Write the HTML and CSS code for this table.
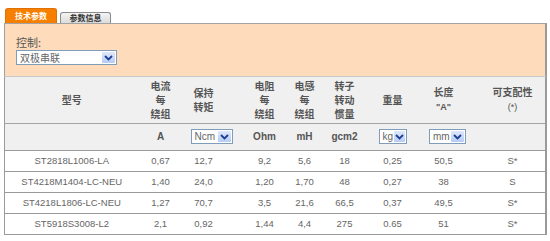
FILE: index.html
```html
<!DOCTYPE html>
<html lang="zh">
<head>
<meta charset="utf-8">
<link rel="stylesheet" href="styles.css">
</head>
<body>
<div class="wrap">
  <div class="tabs">
    <div class="tab active">技术参数</div>
    <div class="tab">参数信息</div>
  </div>
  <div class="panel">
    <div class="label">控制:</div>
    <div class="select wide"><span class="val">双极串联</span><span class="btn"><svg width="9" height="6" viewBox="0 0 9 6"><path d="M1 1 L4.5 4.5 L8 1" fill="none" stroke="#1c3f94" stroke-width="1.8"/></svg></span></div>
  </div>
  <table class="spec">
    <colgroup>
      <col style="width:134px"><col style="width:44px"><col style="width:62px"><col style="width:40px"><col style="width:40px"><col style="width:40px"><col style="width:56px"><col style="width:54px"><col style="width:71px">
    </colgroup>
    <thead>
      <tr class="hrow">
        <th>型号</th>
        <th>电流<br>每<br>绕组</th>
        <th class="c3">保持<br>转矩</th>
        <th>电阻<br>每<br>绕组</th>
        <th>电感<br>每<br>绕组</th>
        <th>转子<br>转动<br>惯量</th>
        <th>重量</th>
        <th class="c8">长度<br><span class="sub">"A"</span></th>
        <th class="c9">可支配性<br><span class="sub n">(*)</span></th>
      </tr>
      <tr class="urow">
        <th></th>
        <th>A</th>
        <th><div class="select unit u-ncm"><span class="val">Ncm</span><span class="btn"><svg width="9" height="6" viewBox="0 0 9 6"><path d="M1 1 L4.5 4.5 L8 1" fill="none" stroke="#1c3f94" stroke-width="1.8"/></svg></span></div></th>
        <th>Ohm</th>
        <th>mH</th>
        <th>gcm2</th>
        <th><div class="select unit u-kg"><span class="val">kg</span><span class="btn"><svg width="9" height="6" viewBox="0 0 9 6"><path d="M1 1 L4.5 4.5 L8 1" fill="none" stroke="#1c3f94" stroke-width="1.8"/></svg></span></div></th>
        <th><div class="select unit u-mm"><span class="val">mm</span><span class="btn"><svg width="9" height="6" viewBox="0 0 9 6"><path d="M1 1 L4.5 4.5 L8 1" fill="none" stroke="#1c3f94" stroke-width="1.8"/></svg></span></div></th>
        <th></th>
      </tr>
    </thead>
    <tbody>
      <tr><td>ST2818L1006-LA</td><td>0,67</td><td class="c3">12,7</td><td>9,2</td><td>5,6</td><td>18</td><td>0,25</td><td class="c8">50,5</td><td class="c9">S*</td></tr>
      <tr><td>ST4218M1404-LC-NEU</td><td>1,40</td><td class="c3">24,0</td><td>1,20</td><td>1,70</td><td>48</td><td>0,27</td><td class="c8">38</td><td class="c9">S</td></tr>
      <tr><td>ST4218L1806-LC-NEU</td><td>1,27</td><td class="c3">70,7</td><td>3,5</td><td>21,6</td><td>66,5</td><td>0,37</td><td class="c8">49,5</td><td class="c9">S*</td></tr>
      <tr><td>ST5918S3008-L2</td><td>2,1</td><td class="c3">0,92</td><td>1,44</td><td>4,4</td><td>275</td><td>0.65</td><td class="c8">51</td><td class="c9">S*</td></tr>
    </tbody>
  </table>
</div>
</body>
</html>
```

FILE: styles.css
```css
* { box-sizing: border-box; }
html, body { margin: 0; padding: 0; background: #fff; }
body { font-family: "Liberation Sans", Arial, "Noto Sans CJK SC", sans-serif; color: #666; }

.wrap { padding: 8px 0 0 4px; width: 547px; }

.tabs { display: flex; align-items: flex-end; gap: 3px; padding-left: 1px; height: 15px; }
.tab {
  font-family: "Noto Sans CJK SC", sans-serif;
  font-weight: bold;
  font-size: 8px;
  line-height: 10px;
  height: 11px;
  width: 51px;
  text-align: center;
  color: #333;
  background: linear-gradient(#f4f4f4, #dcdcdc);
  border: 1px solid #8a8a8a;
  border-bottom: none;
  border-radius: 3px 3px 0 0;
}
.tab.active {
  height: 15px;
  width: 52px;
  line-height: 14px;
  color: #fff;
  background: #f77f00;
  border-color: #e07000;
}

.panel {
  height: 54px;
  background: #fddbbb;
  border-top: 1px solid #a3a3a3;
  border-left: 1px solid #a0a0a0;
  border-right: 2px solid #9a9a9a;
  border-bottom: 1px solid #c8c8c8;
  padding: 11px 11px 0 11px;
}
.label {
  font-family: "Noto Sans CJK SC", sans-serif;
  font-size: 11px;
  line-height: 14px;
  color: #555;
  margin-bottom: 1px;
}

.select {
  display: flex;
  align-items: stretch;
  background: #fff;
  border: 1px solid #7f9db9;
  height: 15px;
}
.select .val {
  flex: 1;
  font-size: 10px;
  line-height: 13px;
  padding-left: 3px;
  color: #666;
  font-family: "Liberation Sans", "Noto Sans CJK SC", sans-serif;
  font-weight: normal;
  text-align: left;
  white-space: nowrap;
}
.select .btn {
  width: 13px;
  margin: 1px;
  background: linear-gradient(#dfe8fb, #b6cbf5);
  border-radius: 1px;
  display: flex;
  align-items: center;
  justify-content: center;
}
.select.wide { width: 101px; }
.select.wide .val { font-family: "Noto Sans CJK SC", sans-serif; font-size: 10px; }

.spec {
  border-collapse: collapse;
  table-layout: fixed;
  width: 542px;
  border-left: 1px solid #9a9a9a;
  border-right: 2px solid #9a9a9a;
}
.spec th {
  background: #f0f0f0;
  color: #555;
  font-weight: bold;
  font-family: "Noto Sans CJK SC", sans-serif;
  font-size: 10px;
  line-height: 14px;
  padding: 0;
  text-align: center;
}
.hrow th { height: 46px; border-bottom: 1px solid #a3a3a3; }
.urow th {
  height: 27px;
  border-bottom: 1px solid #9a9a9a;
  font-family: "Liberation Sans", Arial, sans-serif;
  font-size: 10px;
}
.sub { font-family: "Liberation Sans", Arial, sans-serif; font-size: 9px; }
.sub.n { font-weight: normal; }

.spec td {
  height: 21px;
  padding: 0;
  text-align: center;
  font-size: 9.5px;
  color: #666;
  border-bottom: 1px solid #9a9a9a;
  background: #fff;
}
.spec .c3 { padding-right: 20px; }
.spec .c8 { padding-right: 8px; }
.spec .c9 { padding-left: 6px; }

.select.unit { display: inline-flex; vertical-align: middle; }
.u-ncm { width: 42px; margin-right: 4px; }
.u-kg { width: 28px; }
.u-mm { width: 37px; }
```
